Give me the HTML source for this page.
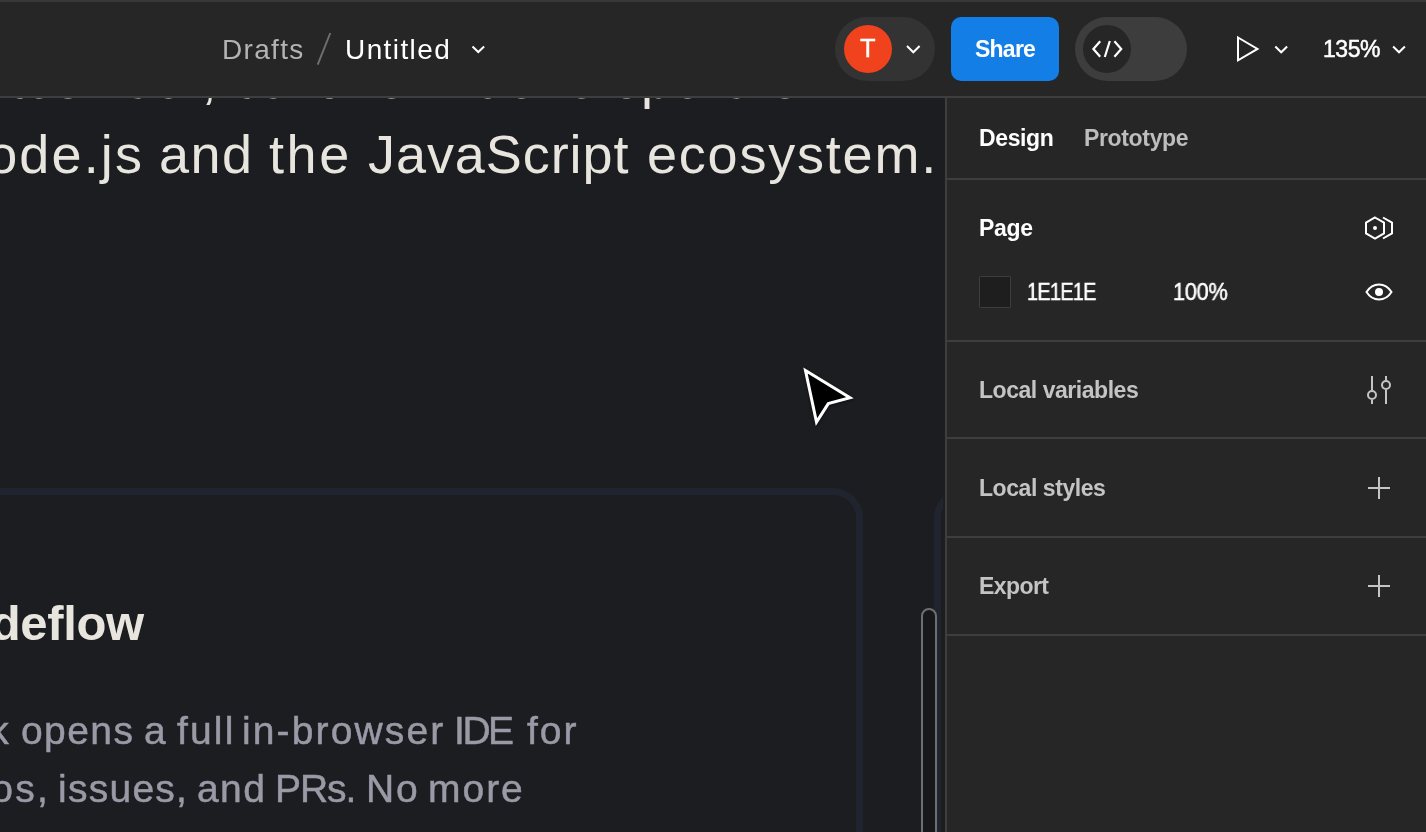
<!DOCTYPE html>
<html lang="en"><head><meta charset="utf-8"><title>Untitled – Figma</title>
<style>
html,body{margin:0;padding:0;background:#1c1d21}
body{width:1426px;height:832px;overflow:hidden}
#app{position:relative;width:1426px;height:832px;overflow:hidden;background:#1c1d21;font-family:"Liberation Sans",sans-serif}
.t{position:absolute;white-space:nowrap;line-height:1;z-index:5;will-change:transform}
.abs{position:absolute;box-sizing:border-box}
#card1{left:-200px;top:488px;width:1063px;height:600px;border:7px solid #1f242e;border-radius:30px;background:#1c1d21}
#card2{left:934px;top:488px;width:600px;height:600px;border:7px solid #1f242e;border-radius:30px;background:#1c1d21}
#scroll{left:921px;top:607.5px;width:16.3px;height:400px;border:2px solid #6c7073;border-radius:8.2px;background:#18181a;z-index:2}
#gutter{left:943px;top:98px;width:2px;height:734px;background:#1e1e1e;z-index:2}
#toolbar{left:0;top:0;width:1426px;height:98px;background:#262626;border-top:2px solid #383838;border-bottom:2px solid #3e3e3e;z-index:3}
#panel{left:945px;top:98px;width:481px;height:734px;background:#262626;border-left:2px solid #3e3e3e;z-index:3}
.hr{left:947px;width:479px;height:2px;background:#3e3e3e;z-index:4}
#avpill{left:835px;top:16.5px;width:100px;height:64.6px;border-radius:32.3px;background:#333333;z-index:4}
#avatar{left:843.5px;top:25px;width:48px;height:48px;border-radius:24px;background:#f0421c;z-index:4}
#share{left:951px;top:16.5px;width:108.2px;height:64.6px;border-radius:10px;background:#127ee6;z-index:4}
#devpill{left:1075px;top:16.5px;width:112.2px;height:64.6px;border-radius:32.3px;background:#3d3d3d;z-index:4}
#devknob{left:1082.5px;top:25px;width:48px;height:48px;border-radius:24px;background:#262626;z-index:4}
#swatch{left:979px;top:276px;width:32px;height:31.5px;background:#1e1e1e;border:1px solid #3c3c3c;border-radius:1px;z-index:4}
#icons{left:0;top:0;z-index:6}
</style></head>
<body>
<div id="app">
<div class="abs" id="card1"></div>
<div class="abs" id="card2"></div>
<div class="abs" id="scroll"></div>
<div class="abs" id="gutter"></div>
<div class="abs" id="toolbar"></div>
<div class="abs" id="panel"></div>
<div class="abs hr" style="top:178px"></div>
<div class="abs hr" style="top:340px"></div>
<div class="abs hr" style="top:437px"></div>
<div class="abs hr" style="top:536px"></div>
<div class="abs hr" style="top:634px"></div>
<div class="abs" id="avpill"></div>
<div class="abs" id="avatar"></div>
<div class="abs" id="share"></div>
<div class="abs" id="devpill"></div>
<div class="abs" id="devknob"></div>
<div class="abs" id="swatch"></div>
<span class="t" style="left:-24.04px;top:52.00px;font-size:54px;font-weight:400;color:#e7e5de;letter-spacing:1.500px;z-index:1">the</span>
<span class="t" style="left:1.92px;top:52.00px;font-size:54px;font-weight:400;color:#e7e5de;letter-spacing:1.500px;z-index:1">browser,</span>
<span class="t" style="left:229.00px;top:52.00px;font-size:54px;font-weight:400;color:#e7e5de;letter-spacing:1.500px;z-index:1">built</span>
<span class="t" style="left:360.00px;top:52.00px;font-size:54px;font-weight:400;color:#e7e5de;letter-spacing:1.500px;z-index:1">for</span>
<span class="t" style="left:475.41px;top:52.00px;font-size:54px;font-weight:400;color:#e7e5de;letter-spacing:1.500px;z-index:1">develo</span>
<span class="t" style="left:640.50px;top:52.00px;font-size:54px;font-weight:400;color:#e7e5de;letter-spacing:1.500px;z-index:1">pers</span>
<span class="t" style="left:770.00px;top:52.00px;font-size:54px;font-weight:400;color:#e7e5de;letter-spacing:1.500px;z-index:1">on</span>
<span class="t" style="left:-54.00px;top:127.00px;font-size:54px;font-weight:400;color:#e7e5de;letter-spacing:2.134px">Node.js</span>
<span class="t" style="left:158.90px;top:127.00px;font-size:54px;font-weight:400;color:#e7e5de;letter-spacing:1.518px">and</span>
<span class="t" style="left:269.30px;top:127.00px;font-size:54px;font-weight:400;color:#e7e5de;letter-spacing:2.582px">the</span>
<span class="t" style="left:367.70px;top:127.00px;font-size:54px;font-weight:400;color:#e7e5de;letter-spacing:0.934px">JavaScript</span>
<span class="t" style="left:646.50px;top:127.00px;font-size:54px;font-weight:400;color:#e7e5de;letter-spacing:1.791px">ecosystem.</span>
<span class="t" style="left:-74.46px;top:599.00px;font-size:49px;font-weight:700;color:#e7e5de;letter-spacing:-0.328px">Codeflow</span>
<span class="t" style="left:-76.83px;top:711.00px;font-size:39px;font-weight:400;color:#9a9aa7;letter-spacing:2.500px;-webkit-text-stroke:0.5px #9a9aa7">click</span>
<span class="t" style="left:21.10px;top:711.00px;font-size:39px;font-weight:400;color:#9a9aa7;letter-spacing:1.410px;-webkit-text-stroke:0.5px #9a9aa7">opens</span>
<span class="t" style="left:144.20px;top:711.00px;font-size:39px;font-weight:400;color:#9a9aa7;letter-spacing:0.000px;-webkit-text-stroke:0.5px #9a9aa7">a</span>
<span class="t" style="left:176.70px;top:711.00px;font-size:39px;font-weight:400;color:#9a9aa7;letter-spacing:2.170px;-webkit-text-stroke:0.5px #9a9aa7">full</span>
<span class="t" style="left:242.00px;top:711.00px;font-size:39px;font-weight:400;color:#9a9aa7;letter-spacing:2.126px;-webkit-text-stroke:0.5px #9a9aa7">in-browser</span>
<span class="t" style="left:454.30px;top:711.00px;font-size:39px;font-weight:400;color:#9a9aa7;letter-spacing:-2.450px;-webkit-text-stroke:0.5px #9a9aa7">IDE</span>
<span class="t" style="left:526.70px;top:711.00px;font-size:39px;font-weight:400;color:#9a9aa7;letter-spacing:1.937px;-webkit-text-stroke:0.5px #9a9aa7">for</span>
<span class="t" style="left:-71.86px;top:769.00px;font-size:39px;font-weight:400;color:#9a9aa7;letter-spacing:2.300px;-webkit-text-stroke:0.5px #9a9aa7">repos,</span>
<span class="t" style="left:58.00px;top:769.00px;font-size:39px;font-weight:400;color:#9a9aa7;letter-spacing:1.259px;-webkit-text-stroke:0.5px #9a9aa7">issues,</span>
<span class="t" style="left:196.80px;top:769.00px;font-size:39px;font-weight:400;color:#9a9aa7;letter-spacing:1.410px;-webkit-text-stroke:0.5px #9a9aa7">and</span>
<span class="t" style="left:274.70px;top:769.00px;font-size:39px;font-weight:400;color:#9a9aa7;letter-spacing:-1.092px;-webkit-text-stroke:0.5px #9a9aa7">PRs.</span>
<span class="t" style="left:365.90px;top:769.00px;font-size:39px;font-weight:400;color:#9a9aa7;letter-spacing:1.835px;-webkit-text-stroke:0.5px #9a9aa7">No</span>
<span class="t" style="left:427.90px;top:769.00px;font-size:39px;font-weight:400;color:#9a9aa7;letter-spacing:1.978px;-webkit-text-stroke:0.5px #9a9aa7">more</span>
<span class="t" style="left:-102.69px;top:828.00px;font-size:39px;font-weight:400;color:#9a9aa7;letter-spacing:2.300px;-webkit-text-stroke:0.5px #9a9aa7">cloning,</span>
<span class="t" style="left:58.00px;top:828.00px;font-size:39px;font-weight:400;color:#9a9aa7;letter-spacing:2.225px;-webkit-text-stroke:0.5px #9a9aa7">installing,</span>
<span class="t" style="left:253.00px;top:828.00px;font-size:39px;font-weight:400;color:#9a9aa7;letter-spacing:2.310px;-webkit-text-stroke:0.5px #9a9aa7">or</span>
<span class="t" style="left:304.00px;top:828.00px;font-size:39px;font-weight:400;color:#9a9aa7;letter-spacing:2.300px;-webkit-text-stroke:0.5px #9a9aa7">waiting.</span>
<span class="t" style="left:221.90px;top:36.00px;font-size:28px;font-weight:400;color:#b3b3b3;letter-spacing:1.325px">Drafts</span>
<span class="t" style="left:345.20px;top:36.00px;font-size:28px;font-weight:400;color:#ffffff;letter-spacing:1.405px">Untitled</span>
<span class="t" style="left:1322.80px;top:38.00px;font-size:23px;font-weight:400;color:#ffffff;letter-spacing:-0.425px;-webkit-text-stroke:0.5px #ffffff">135%</span>
<span class="t" style="left:975.10px;top:38.00px;font-size:23px;font-weight:700;color:#ffffff;letter-spacing:-0.758px">Share</span>
<span class="t" style="left:859.80px;top:36.00px;font-size:25.5px;font-weight:400;color:#ffffff;letter-spacing:0.000px;-webkit-text-stroke:0.4px #ffffff">T</span>
<span class="t" style="left:978.80px;top:127.00px;font-size:23px;font-weight:700;color:#ffffff;letter-spacing:-0.386px">Design</span>
<span class="t" style="left:1083.60px;top:127.00px;font-size:23px;font-weight:700;color:#bdbdbd;letter-spacing:-0.344px">Prototype</span>
<span class="t" style="left:978.80px;top:217.00px;font-size:23px;font-weight:700;color:#ffffff;letter-spacing:-0.327px">Page</span>
<span class="t" style="left:1026.74px;top:281.00px;font-size:23px;font-weight:400;color:#ffffff;letter-spacing:-0.800px;transform:scaleX(0.8639);transform-origin:0 0;-webkit-text-stroke:0.5px #ffffff">1E1E1E</span>
<span class="t" style="left:1172.86px;top:281.00px;font-size:23px;font-weight:400;color:#ffffff;letter-spacing:-0.300px;transform:scaleX(0.9438);transform-origin:0 0;-webkit-text-stroke:0.5px #ffffff">100%</span>
<span class="t" style="left:978.60px;top:379.00px;font-size:23px;font-weight:700;color:#c4c4c4;letter-spacing:-0.465px">Local variables</span>
<span class="t" style="left:978.60px;top:477.00px;font-size:23px;font-weight:700;color:#c4c4c4;letter-spacing:-0.435px">Local styles</span>
<span class="t" style="left:978.60px;top:575.00px;font-size:23px;font-weight:700;color:#c4c4c4;letter-spacing:-0.576px">Export</span>
<svg class="abs" id="icons" width="1426" height="832" viewBox="0 0 1426 832" fill="none" stroke-linecap="butt" stroke-linejoin="miter">
<!-- breadcrumb slash -->
<line x1="330.3" y1="33" x2="317.7" y2="64.6" stroke="#6e6e6e" stroke-width="2"/>
<!-- chevrons -->
<polyline points="472.5,46.5 478.3,52 484.1,46.5" stroke="#fff" stroke-width="2"/>
<polyline points="907,46 913.3,52.3 919.6,46" stroke="#fff" stroke-width="2"/>
<polyline points="1275.3,46.5 1281.2,52.3 1287.1,46.5" stroke="#fff" stroke-width="2"/>
<polyline points="1393.1,46.5 1399,52.3 1404.9,46.5" stroke="#fff" stroke-width="2"/>
<!-- dev mode icon -->
<polyline points="1100.2,41.2 1093.4,49 1100.2,56.8" stroke="#fff" stroke-width="2.2"/>
<polyline points="1114.4,41.2 1121.2,49 1114.4,56.8" stroke="#fff" stroke-width="2.2"/>
<line x1="1109.8" y1="41" x2="1104.8" y2="57" stroke="#fff" stroke-width="2.2"/>
<!-- play -->
<polygon points="1238,37.5 1257.5,48.9 1238,60.3" stroke="#fff" stroke-width="2"/>
<!-- page: component icon -->
<polygon points="1375,217.5 1384,222.7 1384,233.3 1375,238.5 1366,233.3 1366,222.7" stroke="#fff" stroke-width="2"/>
<polyline points="1383,217.5 1392,222.7 1392,233.3 1383,238.5" stroke="#fff" stroke-width="2"/>
<circle cx="1375" cy="228" r="2" fill="#fff"/>
<!-- eye -->
<path d="M1366.5 292 C1370 286.5 1374 284.5 1379 284.5 C1384 284.5 1388 286.5 1391.5 292 C1388 297.5 1384 299.5 1379 299.5 C1374 299.5 1370 297.5 1366.5 292 Z" stroke="#fff" stroke-width="2"/>
<circle cx="1379" cy="292" r="4" fill="#fff"/>
<!-- local variables sliders -->
<g stroke="#c4c4c4" stroke-width="2">
<line x1="1372" y1="376" x2="1372" y2="390"/><circle cx="1372" cy="395" r="4"/><line x1="1372" y1="400" x2="1372" y2="404"/>
<line x1="1386" y1="376" x2="1386" y2="380"/><circle cx="1386" cy="385" r="4"/><line x1="1386" y1="390" x2="1386" y2="404"/>
</g>
<!-- plus icons -->
<g stroke="#c4c4c4" stroke-width="2">
<line x1="1368" y1="488" x2="1390" y2="488"/><line x1="1379" y1="477" x2="1379" y2="499"/>
<line x1="1368" y1="586" x2="1390" y2="586"/><line x1="1379" y1="575" x2="1379" y2="597"/>
</g>
<!-- cursor -->
<polygon points="805.5,370.5 850,397.8 828.3,403.6 816.5,422" fill="#000" stroke="#fff" stroke-width="3" stroke-linejoin="miter" style="filter:drop-shadow(0 1px 1.5px rgba(0,0,0,.55))"/>
</svg>
</div>
</body></html>
